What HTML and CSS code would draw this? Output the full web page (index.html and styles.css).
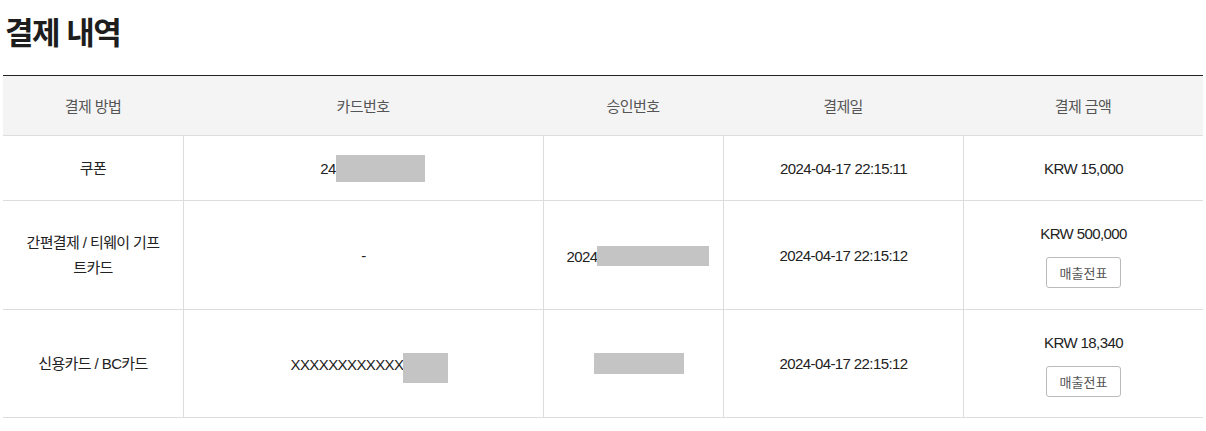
FILE: index.html
```html
<!DOCTYPE html>
<html lang="ko">
<head>
<meta charset="utf-8">
<title>결제 내역</title>
<link rel="stylesheet" href="styles.css">
</head>
<body>
<div class="page">
  <h2 class="title">결제 내역</h2>
  <table class="pay-table">
    <colgroup>
      <col class="c-method">
      <col class="c-card">
      <col class="c-approval">
      <col class="c-date">
      <col class="c-amount">
    </colgroup>
    <thead>
      <tr>
        <th>결제 방법</th>
        <th>카드번호</th>
        <th>승인번호</th>
        <th>결제일</th>
        <th>결제 금액</th>
      </tr>
    </thead>
    <tbody>
      <tr class="row-1">
        <td>쿠폰</td>
        <td><span class="num">24</span><span class="mask mask-a"></span></td>
        <td></td>
        <td>2024-04-17 22:15:11</td>
        <td>KRW 15,000</td>
      </tr>
      <tr class="row-2">
        <td class="method">간편결제 / 티웨이 기프트카드</td>
        <td>-</td>
        <td><span class="num">2024</span><span class="mask mask-b"></span></td>
        <td>2024-04-17 22:15:12</td>
        <td><div class="amount">KRW 500,000</div><button class="receipt" type="button">매출전표</button></td>
      </tr>
      <tr class="row-3">
        <td>신용카드 / BC카드</td>
        <td><span class="num">XXXXXXXXXXXX</span><span class="mask mask-c"></span></td>
        <td><span class="mask mask-d"></span></td>
        <td>2024-04-17 22:15:12</td>
        <td><div class="amount">KRW 18,340</div><button class="receipt" type="button">매출전표</button></td>
      </tr>
    </tbody>
  </table>
</div>
</body>
</html>
```

FILE: styles.css
```css
* { box-sizing: border-box; }

html, body {
  margin: 0;
  padding: 0;
  background: #fff;
}

body {
  font-family: "Liberation Sans", "Noto Sans CJK KR", sans-serif;
  color: #222;
}

.page {
  padding: 0 3px;
}

.title {
  margin: 13px 0 26px 2px;
  font-family: "Noto Sans CJK KR", sans-serif;
  font-size: 31px;
  line-height: 36px;
  font-weight: 700;
  letter-spacing: -1.5px;
  color: #1d1d1d;
}

.pay-table {
  width: 100%;
  table-layout: fixed;
  border-collapse: separate;
  border-spacing: 0;
  border-top: 1px solid #222;
  font-size: 15px;
  letter-spacing: -0.6px;
}

.c-method { width: 180px; }
.c-card { width: 360px; }
.c-approval { width: 180px; }
.c-date { width: 240px; }
.c-amount { width: 240px; }

.pay-table th {
  height: 60px;
  padding: 0;
  background: #f4f4f4;
  border-bottom: 1px solid #ddd;
  font-weight: 400;
  color: #555;
  text-align: center;
  vertical-align: middle;
}

.pay-table td {
  padding: 0 18px;
  border-bottom: 1px solid #ddd;
  border-left: 1px solid #ddd;
  text-align: center;
  vertical-align: middle;
  line-height: 25px;
  color: #222;
}

.pay-table td:first-child {
  border-left: none;
}

.row-1 td { height: 65px; }
.row-2 td { height: 109px; }
.row-3 td { height: 108px; }

.num {
  vertical-align: middle;
}

.mask {
  display: inline-block;
  vertical-align: middle;
  background: #c4c4c4;
}

.mask-a { width: 89px; height: 27px; margin-right: -18px; }
.mask-b { width: 112px; height: 20px; margin-right: -9px; }
.mask-c { width: 45px; height: 30px; margin-right: -12px; margin-top: 8px; }
.mask-d { width: 90px; height: 21px; margin-right: -10px; margin-top: -4px; }

.amount {
  line-height: 24px;
}

.receipt {
  display: inline-block;
  margin-top: 11px;
  width: 75px;
  height: 31px;
  padding: 0;
  background: #fff;
  border: 1px solid #bbb;
  border-radius: 3px;
  font-family: "Noto Sans CJK KR", sans-serif;
  font-size: 13px;
  letter-spacing: 0;
  color: #555;
  cursor: pointer;
}
```
